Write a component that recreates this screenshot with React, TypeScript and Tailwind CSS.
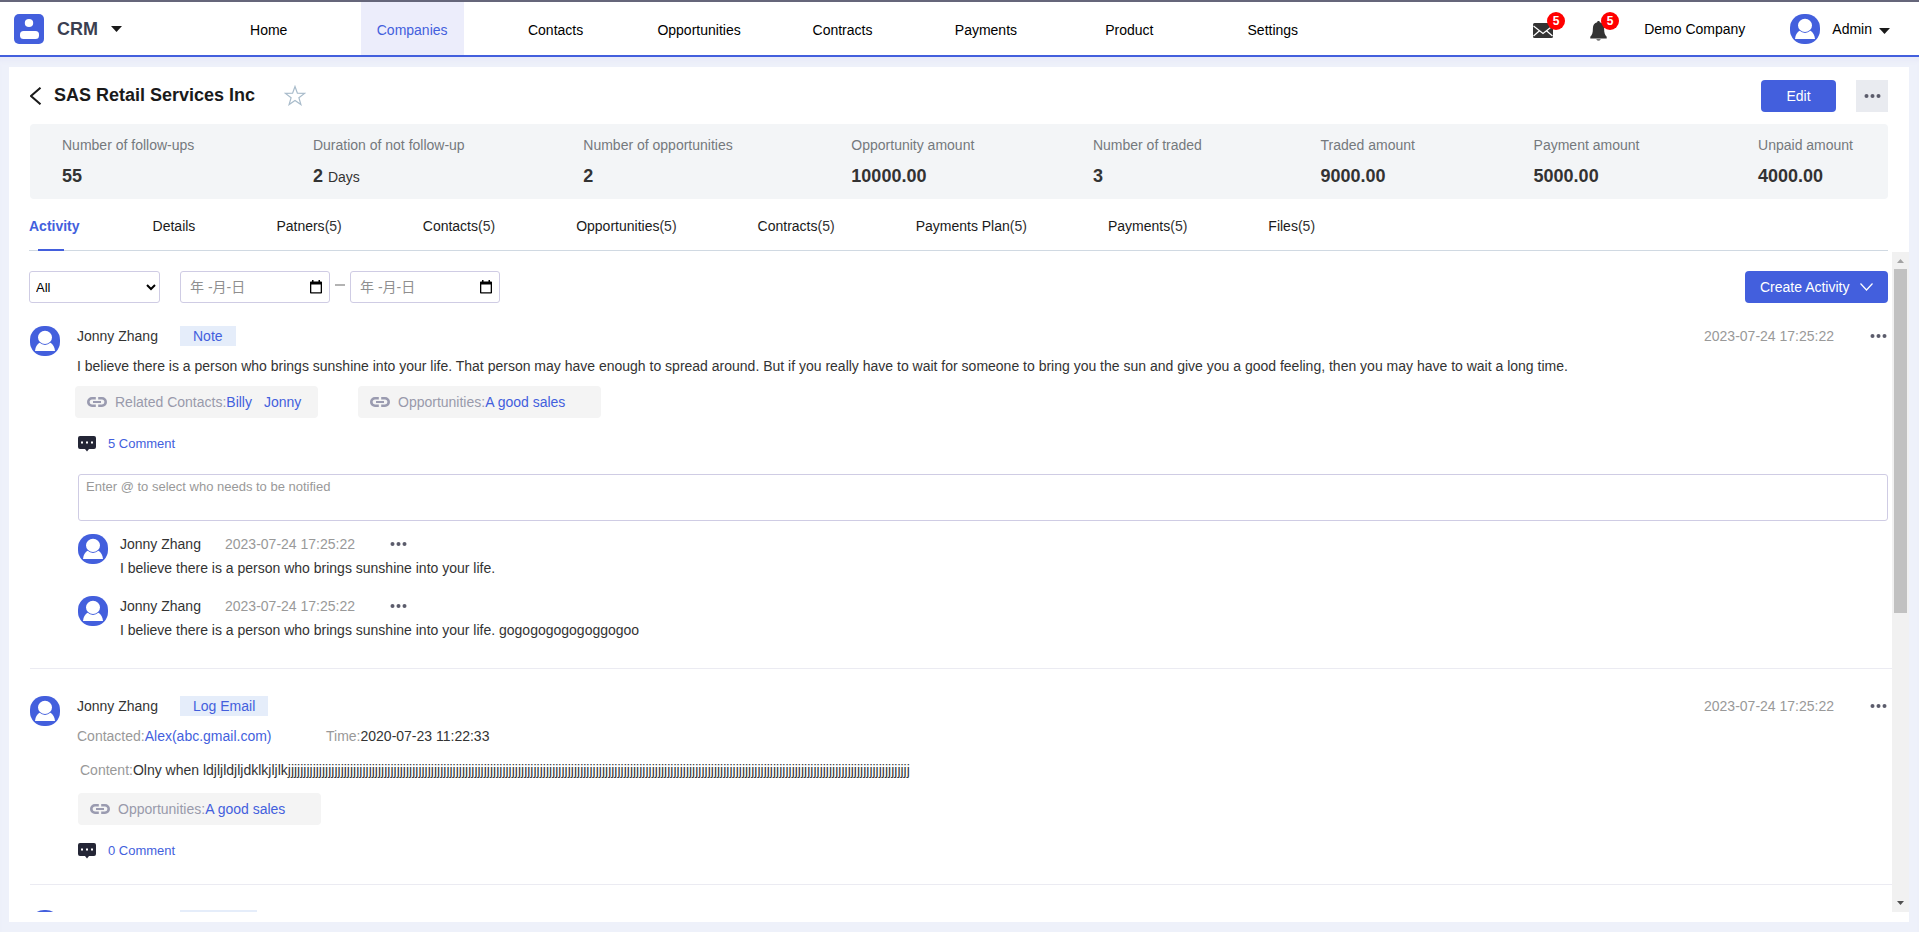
import type { ReactNode } from 'react'
import clsx from 'clsx'

const navItems = [
  'Home',
  'Companies',
  'Contacts',
  'Opportunities',
  'Contracts',
  'Payments',
  'Product',
  'Settings',
]

const stats = [
  { label: 'Number of follow-ups', value: '55' },
  { label: 'Duration of not follow-up', value: '2', unit: 'Days' },
  { label: 'Number of opportunities', value: '2' },
  { label: 'Opportunity amount', value: '10000.00' },
  { label: 'Number of traded', value: '3' },
  { label: 'Traded amount', value: '9000.00' },
  { label: 'Payment amount', value: '5000.00' },
  { label: 'Unpaid amount', value: '4000.00' },
]

const tabs = [
  { name: 'Details' },
  { name: 'Patners', count: 5 },
  { name: 'Contacts', count: 5 },
  { name: 'Opportunities', count: 5 },
  { name: 'Contracts', count: 5 },
  { name: 'Payments Plan', count: 5 },
  { name: 'Payments', count: 5 },
  { name: 'Files', count: 5 },
]

const comments = [
  'I believe there is a person who brings sunshine into your life.',
  'I believe there is a person who brings sunshine into your life. gogogogogogoggogoo',
]

const emailContent = 'Olny when ldjljldjljdklkjljlk' + 'j'.repeat(200)

function Avatar() {
  return (
    <svg width="30" height="30" viewBox="0 0 30 30" className="shrink-0" aria-hidden="true">
      <rect width="30" height="30" rx="14" fill="#435fdd" />
      <path d="M5 25c.3-3.800 2-6.800 4.800-8.500h10.400c2.800 1.700 4.500 4.700 4.800 8.500z" fill="#fff" />
      <ellipse cx="15" cy="11.700" rx="7.500" ry="7.300" fill="#435fdd" />
      <ellipse cx="15" cy="11.400" rx="7" ry="6.600" fill="#fff" />
    </svg>
  )
}

function Dots() {
  return (
    <svg width="17" height="5" viewBox="0 0 17 5" fill="#5b5c6b" aria-hidden="true">
      <circle cx="2.500" cy="2" r="2" />
      <circle cx="8.500" cy="2" r="2" />
      <circle cx="14.500" cy="2" r="2" />
    </svg>
  )
}

function Caret() {
  return (
    <svg width="11" height="6" viewBox="0 0 11 6" aria-hidden="true">
      <path d="M0 0h11L5.500 6z" fill="#1a1a1a" />
    </svg>
  )
}

function LinkIcon() {
  return (
    <svg width="20" height="10" viewBox="0 0 20 10" fill="none" stroke="#9a9bb0" strokeWidth="2.600" aria-hidden="true">
      <path d="M8.800 1.300H5a3.700 3.700 0 0 0 0 7.400h3.800M11.200 1.300H15a3.700 3.700 0 0 1 0 7.400h-3.800" />
      <path d="M6 5h8" strokeWidth="2" />
    </svg>
  )
}

function CommentIcon() {
  return (
    <svg width="18" height="16" viewBox="0 0 18 16" aria-hidden="true">
      <path d="M2 0h14a2 2 0 0 1 2 2v9a2 2 0 0 1-2 2h-5L9 15.500 7 13H2a2 2 0 0 1-2-2V2a2 2 0 0 1 2-2z" fill="#242636" />
      <path d="M3 5.500h2v2H3zM8 5.500h2v2H8zM13 5.500h2v2h-2z" fill="#fff" />
    </svg>
  )
}

function Badge({ children }: { children: ReactNode }) {
  return (
    <span className="absolute -right-3 -top-[10px] flex h-[18px] w-[18px] items-center justify-center rounded-full bg-[#ff0000] text-xs font-bold text-white">
      {children}
    </span>
  )
}

function Header() {
  return (
    <header className="flex h-[57px] shrink-0 items-stretch border-t-2 border-b-2 border-t-[#65667a] border-b-[#435fdd] bg-white">
      <button className="flex w-[197px] items-center pl-[14px] text-left">
        <svg width="30" height="30" viewBox="0 0 30 30" aria-hidden="true">
          <rect width="30" height="30" rx="5" fill="#435fdd" />
          <ellipse cx="15" cy="9" rx="4.200" ry="4" fill="#fff" />
          <rect x="6" y="17" width="19" height="8" rx="3.500" fill="#fff" />
        </svg>
        <span className="ml-[13px] mr-[13px] text-lg font-bold text-[#3b3f51]">CRM</span>
        <Caret />
      </button>

      <nav className="grid w-[59.8%] grid-cols-8">
        {navItems.map((item) => (
          <a
            key={item}
            href="#"
            className={clsx(
              'flex items-center justify-center justify-self-center px-4 pt-0.5',
              item === 'Companies' ? 'bg-[#ecedfb] text-[#435fdd]' : 'text-black'
            )}
          >
            {item}
          </a>
        ))}
      </nav>

      <div className="ml-auto flex items-center pr-[29px] text-black">
        <button aria-label="Messages" className="relative mr-[37px] mt-1 flex h-[18px] items-center">
          <svg width="20" height="15" viewBox="0 0 20 15" aria-hidden="true">
            <rect width="20" height="15" rx="1.500" fill="#333" />
            <path d="M.5 3 10 10.500 19.500 3M.5 13l6-5.200M19.500 13l-6-5.200" fill="none" stroke="#fff" strokeWidth="1.200" />
          </svg>
          <Badge>5</Badge>
        </button>
        <button aria-label="Notifications" className="relative mr-[37px] mt-1 flex h-[18px] items-center">
          <svg width="17" height="20" viewBox="0 0 17 20" aria-hidden="true">
            <path d="M8.500 0c.8 0 1.300.5 1.300 1.200 2.700.7 4.300 2.900 4.300 6 0 4.500.7 6.700 2.600 8.500v1.800H.3v-1.800c1.900-1.800 2.600-4 2.600-8.500 0-3.100 1.600-5.300 4.300-6C7.200.5 7.700 0 8.500 0z" fill="#333" />
            <path d="M6.300 18h4.400c-.3 1.200-1.100 1.800-2.200 1.800S6.600 19.200 6.300 18z" fill="#777" />
          </svg>
          <Badge>5</Badge>
        </button>
        <span>Demo Company</span>
        <button className="ml-[45px] flex items-center">
          <Avatar />
          <span className="ml-3 mr-[7px]">Admin</span>
          <span className="pt-1">
            <Caret />
          </span>
        </button>
      </div>
    </header>
  )
}

function CompanyHeading() {
  return (
    <div className="flex items-center">
      <button aria-label="Back" className="mr-3">
        <svg width="12" height="18" viewBox="0 0 12 18" fill="none" stroke="#1a1a1a" strokeWidth="2" aria-hidden="true">
          <path d="M10.500 .7 1 9l9.500 8.300" />
        </svg>
      </button>
      <h1 className="pb-0.5 text-lg font-bold text-[#1a1a1a]">SAS Retail Services Inc</h1>
      <button aria-label="Add to favourites" className="ml-[29px] pb-0.5">
        <svg width="22" height="21" viewBox="0 0 22 21" fill="none" stroke="#a9bccb" strokeWidth="1.200" aria-hidden="true">
          <path d="M11 1.500l2.400 6.700 7.100.2-5.600 4.300 2 6.900L11 15.500l-5.900 4.100 2-6.900L1.500 8.400l7.100-.2z" />
        </svg>
      </button>
      <button className="ml-auto h-8 w-[75px] rounded-sm bg-[#435fdd] text-white">Edit</button>
      <button aria-label="More" className="ml-5 flex h-8 w-8 items-center justify-center bg-[#e9ebf0]">
        <Dots />
      </button>
    </div>
  )
}

function StatsPanel() {
  return (
    <dl className="mt-3 flex h-[75px] justify-between rounded bg-[#f3f5f7] pl-8 pr-[35px] pt-[11px]">
      {stats.map((stat) => (
        <div key={stat.label}>
          <dt className="leading-5 text-[#75797d]">{stat.label}</dt>
          <dd className="mt-[9px] leading-6 text-[#333]">
            <span className="text-lg font-bold leading-6">{stat.value}</span>
            {stat.unit && <span className="ml-[5px]">{stat.unit}</span>}
          </dd>
        </div>
      ))}
    </dl>
  )
}

function Tabs() {
  return (
    <div role="tablist" className="mr-[21px] flex h-[52px] border-b border-[#d0d9e2] pt-[3px]">
      <button role="tab" aria-selected="true" className="relative mr-[73px] font-bold text-[#435fdd]">
        Activity
        <span className="absolute -bottom-px left-[9px] h-0.5 w-[26px] bg-[#435fdd]" />
      </button>
      {tabs.map((tab) => (
        <button key={tab.name} role="tab" aria-selected="false" className="mr-[81px] text-[#1a1a1a]">
          {tab.name}
          {tab.count && <span className="text-[#333]">({tab.count})</span>}
        </button>
      ))}
    </div>
  )
}

function DateField({ label }: { label: string }) {
  return (
    <label className="flex h-8 w-[150px] items-center rounded-[3px] border border-[#cfcce4] pl-[9px] pr-[7px]">
      <input
        type="text"
        aria-label={label}
        placeholder="年 -月-日"
        className="w-full min-w-0 outline-none placeholder:text-[#8f8f8f]"
      />
      <svg width="12" height="14" viewBox="0 0 12 14" className="shrink-0" aria-hidden="true">
        <path d="M2 0h1.500v1.500h5V0H10v1.500h1.200c.5 0 .8.300.8.800v10.400c0 .5-.3.800-.8.800H.8c-.5 0-.8-.3-.8-.8V2.300c0-.5.300-.8.800-.8H2zM1.300 4.500v7.700h9.400V4.500z" fill="#000" fillRule="evenodd" />
      </svg>
    </label>
  )
}

function Filters() {
  return (
    <div className="flex pr-1">
      <select
        aria-label="Activity type"
        className="mr-5 h-8 w-[131px] rounded-[3px] border border-[#cfcce4] bg-white pl-0.5 text-[13px] text-black"
      >
        <option>All</option>
      </select>
      <DateField label="Start date" />
      <span className="mx-[5px] mt-[13px] h-0.5 w-[10px] bg-[#b3b3b3]" />
      <DateField label="End date" />
      <button className="ml-auto flex h-8 w-[143px] items-center justify-between rounded-sm bg-[#435fdd] px-[15px] text-white">
        Create Activity
        <svg width="13" height="8" viewBox="0 0 13 8" fill="none" stroke="#fff" strokeWidth="1.200" aria-hidden="true">
          <path d="M.5.5l6 6.500 6-6.500" />
        </svg>
      </button>
    </div>
  )
}

type ActivityProps = {
  tag: string
  children?: ReactNode
  className?: string
}

function Activity({ tag, children, className }: ActivityProps) {
  return (
    <article className={clsx('flex', className)}>
      <Avatar />
      <div className="ml-[15px] min-w-0 flex-1">
        <div className="flex h-5 items-center pl-0.5">
          <span className="w-[103px] text-[#333]">Jonny Zhang</span>
          <span className="bg-[#e5edfa] px-[13px] leading-5 text-[#435fdd]">{tag}</span>
          <time className="ml-auto mr-9 text-[#999]">2023-07-24 17:25:22</time>
          <button aria-label="Activity options" className="mr-[5px]">
            <Dots />
          </button>
        </div>
        {children}
      </div>
    </article>
  )
}

function RelatedChip({ label, links }: { label: string; links: string[] }) {
  return (
    <div className="flex h-8 w-[243px] items-center rounded bg-[#f4f4f4] pl-3">
      <LinkIcon />
      <span className="ml-2 text-[#999aab]">{label}:</span>
      <span className="flex gap-3">
        {links.map((link) => (
          <a key={link} href="#" className="text-[#435fdd]">
            {link}
          </a>
        ))}
      </span>
    </div>
  )
}

function CommentCount({ count }: { count: number }) {
  return (
    <button className="mt-4 flex h-5 items-center gap-3 pl-[3px] text-[13px] text-[#435fdd]">
      <CommentIcon />
      {count} Comment
    </button>
  )
}

function CommentThread() {
  return (
    <div className="pl-[3px] pr-1">
      <textarea
        aria-label="New comment"
        placeholder="Enter @ to select who needs to be notified"
        className="mt-5 block h-[47px] w-full resize-none rounded-[3px] border border-[#cfcce4] px-[7px] pt-1 text-[13px] leading-4 outline-none placeholder:text-[#999]"
      />
      <ul className="mt-[13px] flex flex-col gap-[18px]">
        {comments.map((text) => (
          <li key={text} className="flex gap-3">
            <Avatar />
            <div className="leading-5 text-[#333]">
              <div className="flex h-5 items-center">
                <span className="w-[105px]">Jonny Zhang</span>
                <time className="mr-[35px] text-[#999]">2023-07-24 17:25:22</time>
                <button aria-label="Comment options">
                  <Dots />
                </button>
              </div>
              <p className="mt-1">{text}</p>
            </div>
          </li>
        ))}
      </ul>
    </div>
  )
}

function ScrollTrack() {
  return (
    <div className="flex w-[17px] shrink-0 flex-col items-center bg-[#f1f1f1]" aria-hidden="true">
      <svg width="17" height="17" viewBox="0 0 17 17" className="shrink-0">
        <path d="M5 11h7L8.500 7z" fill="#a3a3a3" />
      </svg>
      <div className="min-h-0 w-full flex-1 px-0.5">
        <div className="h-[55%] bg-[#c1c1c1]" />
      </div>
      <svg width="17" height="17" viewBox="0 0 17 17" className="shrink-0">
        <path d="M5 6h7l-3.500 4z" fill="#505050" />
      </svg>
    </div>
  )
}

export default function App() {
  return (
    <div className="flex h-screen flex-col bg-white pb-0.5 font-['Liberation_Sans','Noto_Sans_CJK_SC',sans-serif] text-sm leading-5">
      <Header />
      <div className="flex min-h-0 flex-1 bg-[#eef1fa] pb-[10px] pl-[9px] pr-[10px] pt-[10px] shadow-[inset_0_6px_4px_-2px_#e8eaf8]">
        <main className="flex min-w-0 flex-1 flex-col bg-white pb-[10px] pl-5">
          <div className="pl-px pr-[21px] pt-[13px]">
            <CompanyHeading />
            <StatsPanel />
          </div>
          <Tabs />

          <div className="mt-px flex min-h-0 flex-1">
            <div className="min-w-0 flex-1 overflow-hidden pt-[19px]">
              <Filters />

              <Activity tag="Note" className="ml-px mt-[23px] border-b border-[#ebebf2] pb-7">
                <p className="mt-[10px] pl-0.5 text-[#333]">
                  I believe there is a person who brings sunshine into your life. That person may have enough to spread
                  around. But if you really have to wait for someone to bring you the sun and give you a good feeling,
                  then you may have to wait a long time.
                </p>
                <div className="mt-[10px] flex gap-10">
                  <RelatedChip label="Related Contacts" links={['Billy', 'Jonny']} />
                  <RelatedChip label="Opportunities" links={['A good sales']} />
                </div>
                <CommentCount count={5} />
                <CommentThread />
              </Activity>

              <Activity tag="Log Email" className="ml-px border-b border-[#ebebf2] pb-[23px] pt-[27px]">
                <div className="mt-[10px] flex pl-0.5 text-[#333]">
                  <p className="w-[249px]">
                    <span className="text-[#999]">Contacted:</span>
                    <a href="#" className="text-[#435fdd]">
                      Alex(abc.gmail.com)
                    </a>
                  </p>
                  <p>
                    <span className="text-[#999]">Time:</span>2020-07-23 11:22:33
                  </p>
                </div>
                <p className="mt-[14px] truncate pl-[5px] text-[#333]">
                  <span className="text-[#999]">Content:</span>
                  {emailContent}
                </p>
                <div className="mt-[13px] pl-[3px]">
                  <RelatedChip label="Opportunities" links={['A good sales']} />
                </div>
                <CommentCount count={0} />
              </Activity>

              <Activity tag="Log Call" className="ml-px pt-[25px]" />
            </div>
            <ScrollTrack />
          </div>
        </main>
      </div>
    </div>
  )
}
